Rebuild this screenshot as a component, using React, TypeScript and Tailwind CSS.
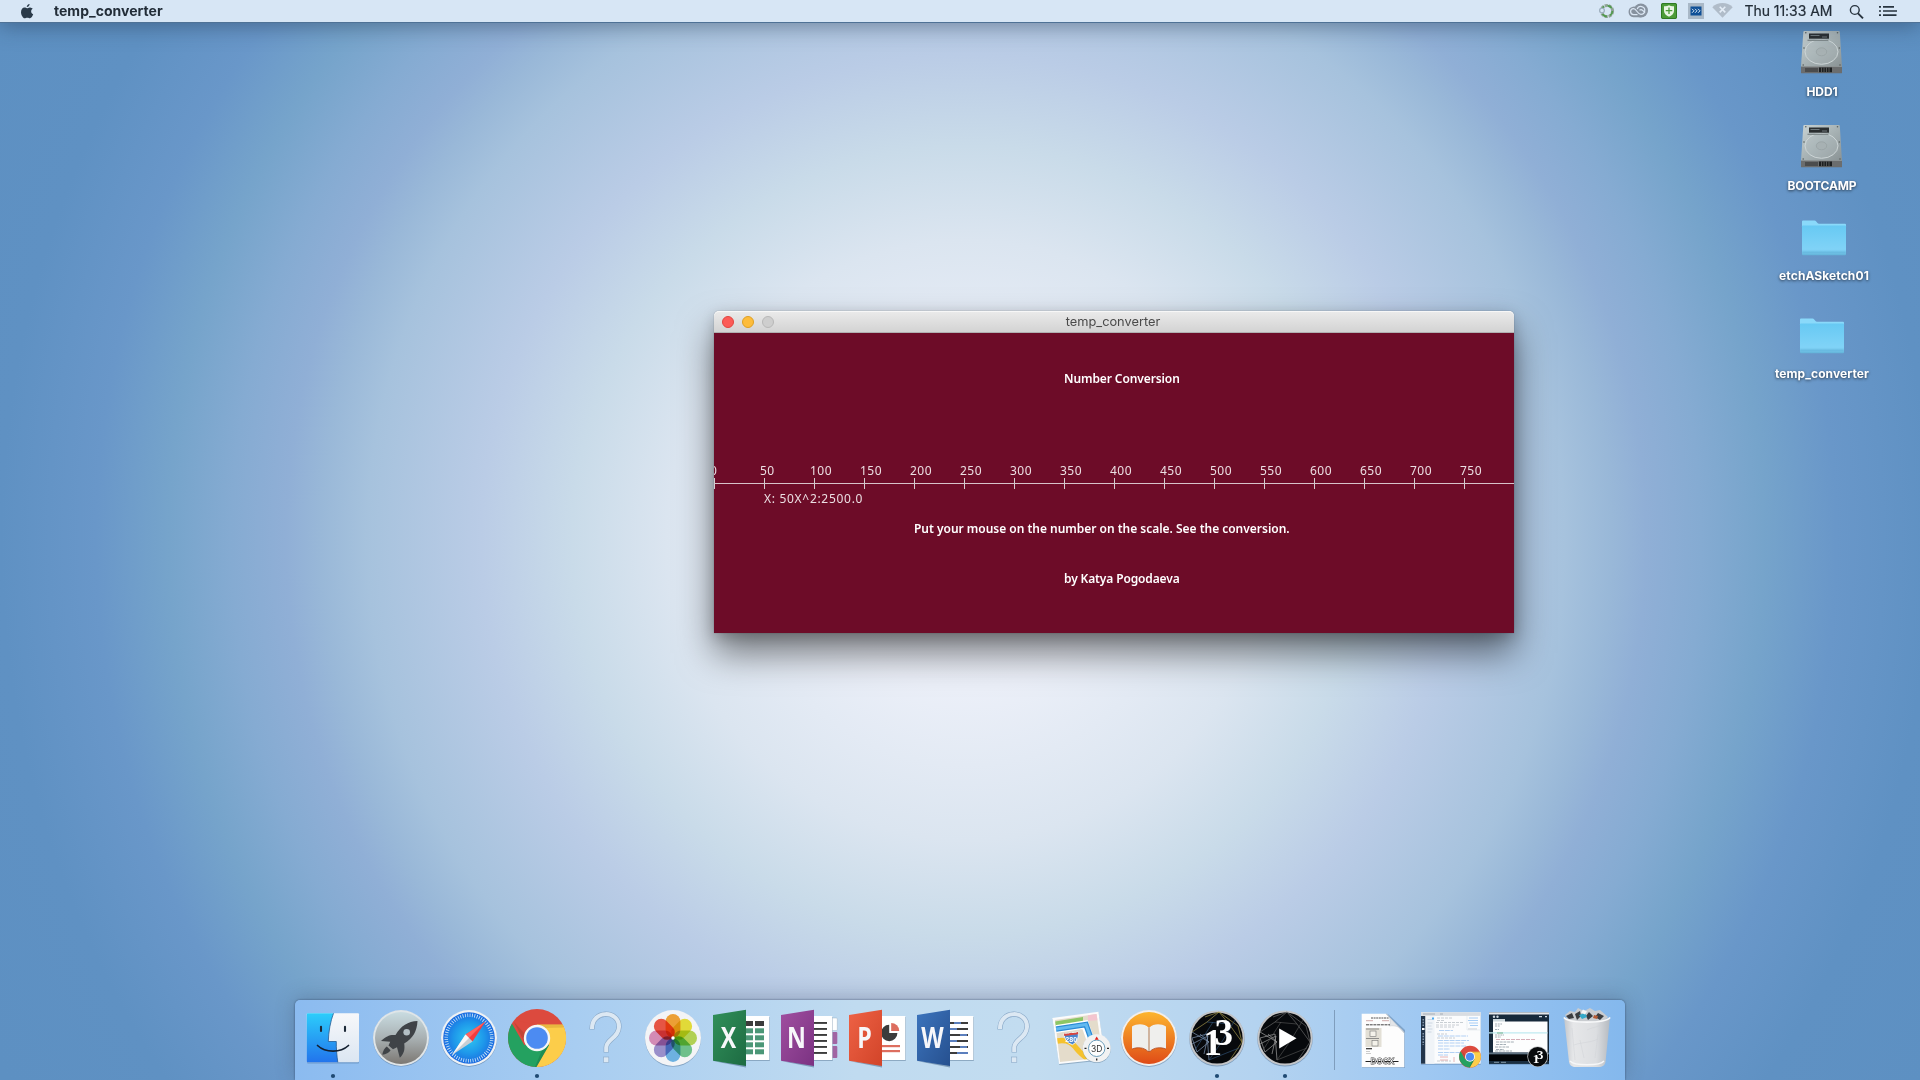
import React from "react";

const UI = "font-['Inter',sans-serif]";

/* ---------- menu bar ---------- */

function AppleMark() {
  return (
    <svg width="14" height="17" viewBox="0 0 14 17" fill="#2a3a49">
      <path d="M9.6 1c.1 1.6-1.300 3.100-2.800 3C6.600 2.500 8.100 1.100 9.600 1z" />
      <path d="M7 5.200c.6 0 1.600-.9 3.100-.8 1.100.1 2 .5 2.600 1.400-2.300 1.400-1.900 4.600.5 5.500-.6 1.700-1.900 4-3.200 4-1 0-1.400-.6-2.700-.6s-1.700.6-2.700.6C3.200 15.300 1 12 1 9.200c0-2.900 1.700-4.700 3.500-4.700 1.200 0 1.900.7 2.500.7z" />
    </svg>
  );
}

function MenuBar() {
  return (
    <header className={`relative z-10 flex h-[22px] items-center bg-[#d7e6f5] text-[#222d38] shadow-[0_1px_0_#4f7296,0_3px_22px_rgba(30,50,75,0.5)] ${UI}`}>
      <div className="ml-[20px] w-[34px]">
        <AppleMark />
      </div>
      <span className="text-[14px] font-bold leading-[22px] tracking-[0.02px]">temp_converter</span>
      <div className="ml-auto flex items-center">
        <svg width="150" height="22" viewBox="1592 0 150 22">
          {/* sync ring */}
          <circle cx="1607" cy="11" r="5.600" fill="none" stroke="#8fa395" strokeWidth="3" strokeDasharray="3 .9" />
          <circle cx="1607" cy="11" r="5.400" fill="none" stroke="#4f9a4c" strokeWidth="1.600" strokeDasharray="5 3.400" />
          <circle cx="1602" cy="10.500" r="2.400" fill="#d7e6f5" stroke="#9fb0c0" strokeWidth="1.300" />
          {/* creative cloud */}
          <path d="M1633.500 17.200a5.300 5.300 0 0 1-.6-10.500 4 4 0 0 1 2.500.1A7 7 0 0 1 1647.700 10.800a7 7 0 0 1-7 6.400z" fill="#87929f" />
          <circle cx="1640.900" cy="10.500" r="7" fill="#87929f" />
          <g fill="none" stroke="#dbe7f4" strokeWidth="1.200">
            <path d="M1637.500 14.600h-3.900a3 3 0 0 1 0-6c3 0 3.600 5.700 7.300 5.700a3.900 3.900 0 1 0-3.700-5.200" />
            <path d="M1639.500 10.200c1-.8 2-.9 3 .1l2.600 2.300" />
          </g>
          {/* shield */}
          <rect x="1661" y="3" width="16" height="16" rx="2" fill="#4c9b38" />
          <rect x="1661.500" y="3.500" width="15" height="15" rx="1.500" fill="none" stroke="#2f7a24" />
          <path d="M1664 6.200c2 .3 3.500-.1 5-1 1.500.9 3 1.300 5 1v4.500c0 3-2.300 4.800-5 6-2.700-1.200-5-3-5-6z" fill="#e9f5e4" />
          <path d="M1669 7.500v6.600M1665.700 10.600h6.600" stroke="#4c9b38" strokeWidth="1.300" />
          {/* remote desktop */}
          <rect x="1688" y="3" width="16" height="16" fill="#a9b8c7" />
          <rect x="1690.500" y="6.500" width="11" height="9" fill="#0f4f96" />
          <path d="M1692 8.800l2 2-2 2M1695 8.800l2 2-2 2M1698 8.800l2 2-2 2" fill="none" stroke="#dce9f6" strokeWidth="1" />
          {/* wifi, off */}
          <path d="M1722.500 17.800L1712.300 7.300a14.500 14.500 0 0 1 20.400 0z" fill="#b0bcc9" />
          <path d="M1719.700 6.800l5.600 5.600M1725.300 6.800l-5.600 5.600" stroke="#e4edf7" strokeWidth="1.600" />
        </svg>
        <span className="w-[90px] whitespace-nowrap pl-[2.500px] text-[14px] leading-[22px] tracking-[-0.05px] [-webkit-text-stroke:0.2px_#222d38]">Thu 11:33 AM</span>
        <svg width="88" height="22" viewBox="1832 0 88 22" fill="none" stroke="#28343f">
          <circle cx="1854.800" cy="10" r="4.400" strokeWidth="1.400" />
          <path d="M1858 13.300l5 5" strokeWidth="1.900" />
          <path d="M1883 6.800h11M1883 11h14M1883 15.200h13.500" strokeWidth="1.700" />
          <path d="M1879 6.800h2M1879 11h2M1879 15.200h2" strokeWidth="1.700" />
        </svg>
      </div>
    </header>
  );
}

/* ---------- desktop items ---------- */

function Drive() {
  return (
    <svg width="44" height="44" viewBox="0 0 44 44">
      <defs>
        <linearGradient id="drv" x1="0" y1="0" x2="1" y2="1">
          <stop offset="0" stopColor="#c9d3d4" />
          <stop offset=".5" stopColor="#a7b2b4" />
          <stop offset="1" stopColor="#899294" />
        </linearGradient>
      </defs>
      <path d="M4.300 1h34.400q1 0 1.100 1L42 37H1L3.300 2q.1-1 1-1z" fill="url(#drv)" />
      <path d="M1 36.500h41v6.200q0 .5-.5.5H1.500q-.5 0-.5-.5z" fill="#6b6d6e" />
      <path d="M1 36.500h41" stroke="#8d9394" strokeWidth="1" />
      <rect x="5" y="38" width="13" height="4" fill="#4b4c4d" />
      <rect x="19" y="37.500" width="13" height="4.700" fill="#1d1f20" />
      <path d="M21.500 37.500v4.700M24 37.500v4.700M26.500 37.500v4.700M29 37.500v4.700" stroke="#6b6d6e" strokeWidth=".7" />
      <ellipse cx="21.500" cy="21.800" rx="16.500" ry="12.500" fill="#b3bec0" fillOpacity=".35" stroke="#d0d8d9" strokeWidth=".9" />
      <ellipse cx="21.500" cy="21.800" rx="5.200" ry="4" fill="#a7b1b3" stroke="#959fa1" strokeWidth=".7" />
      <rect x="9" y="3.500" width="20" height="5.200" fill="#2a2e30" />
      <path d="M10.500 5.500h9M22 7h5" stroke="#6e777a" strokeWidth="1" />
      <rect x="7.500" y="9.700" width="21" height="1.200" fill="#7c8587" />
      <g fill="#59605f">
        <circle cx="5.800" cy="2.800" r=".8" />
        <circle cx="37.500" cy="2.800" r=".8" />
        <circle cx="4" cy="18" r=".8" />
        <circle cx="39.300" cy="18" r=".8" />
        <circle cx="3.200" cy="35" r=".8" />
        <circle cx="40" cy="35" r=".8" />
      </g>
    </svg>
  );
}

function Folder() {
  return (
    <svg width="46" height="36" viewBox="0 0 46 36">
      <defs>
        <linearGradient id="fld" x1="0" y1="0" x2="0" y2="1">
          <stop offset="0" stopColor="#67c9f3" />
          <stop offset=".8" stopColor="#80d3f7" />
          <stop offset=".9" stopColor="#72c4e9" />
          <stop offset="1" stopColor="#63b3d9" />
        </linearGradient>
      </defs>
      <path d="M1 1.500q0-1 1-1h11.500q1 0 1.700.9l1.300 1.700q.5.600 1.500.6H44q1 0 1 1V9H1z" fill="#8ad9fa" />
      <path d="M1 6.200q0-.8.800-.8h42.400q.8 0 .8.800V34q0 1.200-1 1.200H2q-1 0-1-1.200z" fill="url(#fld)" />
      <path d="M1.500 32.200h43" stroke="#5fb0d8" strokeWidth=".6" />
    </svg>
  );
}

function DesktopItem({ label, place, labelGap, track, children }: { label: string; place: string; labelGap: string; track: string; children: React.ReactNode }) {
  return (
    <div className={`absolute flex w-[120px] flex-col items-center ${place}`}>
      {children}
      <span className={`whitespace-nowrap text-[12px] font-bold leading-[16px] text-white [text-shadow:0_1px_3px_rgba(0,0,0,0.65)] ${UI} ${labelGap} ${track}`}>{label}</span>
    </div>
  );
}

/* ---------- application window ---------- */

const LUCIDA = "font-['Noto_Sans',sans-serif]";
const marks = Array.from({ length: 16 }, (_, i) => i * 50);

function SketchWindow() {
  return (
    <section className="absolute left-[714px] top-[311px] flex h-[322px] w-[800px] flex-col rounded-t-[5px] shadow-[0_0_1px_rgba(0,0,0,0.5),0_20px_36px_rgba(0,0,0,0.5),0_4px_14px_rgba(0,0,0,0.18)]">
      <div className="relative flex h-[22px] items-center rounded-t-[5px] border-b border-[#b1b1b1] bg-linear-to-b from-[#ebebeb] to-[#d3d3d3] px-2 shadow-[inset_0_1px_0_#f7f7f7]">
        <div className="flex gap-2">
          <i className="size-3 rounded-full border border-[#e2453f] bg-[#fc5b57]" />
          <i className="size-3 rounded-full border border-[#dfa023] bg-[#fdbc3b]" />
          <i className="size-3 rounded-full border border-[#b8b8b8] bg-[#cecece]" />
        </div>
        <span className={`absolute inset-x-0 top-[1px] pr-[2px] text-center text-[12.800px] leading-[20px] text-[#4a4a4a] ${UI}`}>temp_converter</span>
      </div>
      <div className={`flex h-[300px] flex-col overflow-hidden bg-[#6d0c28] text-[12px] leading-[16px] text-white ${LUCIDA}`}>
        <p className="ml-[350px] mt-[38px] whitespace-nowrap font-semibold tracking-[-0.1px]">Number Conversion</p>
        <div className="mt-[76px] flex w-[850px] text-[#ecdfe3]">
          {marks.map((n) => (
            <span key={n} className={n === 0 ? "-ml-[4px] w-[50px] shrink-0 tracking-[0.5px]" : "w-[50px] shrink-0 tracking-[0.5px]"}>
              {n}
            </span>
          ))}
        </div>
        <div className="relative -mt-px flex h-[11px]">
          <div className="absolute inset-x-0 top-[5px] h-px bg-[#d8c3ca]" />
          {marks.map((n) => (
            <div key={n} className="w-[50px] shrink-0 border-l border-[#d3ced0]" />
          ))}
        </div>
        <p className="ml-[50px] mt-[2px] whitespace-nowrap tracking-[0.7px] text-[#ecdfe3]">X: 50X^2:2500.0</p>
        <p className="ml-[200px] mt-[14px] whitespace-nowrap font-semibold tracking-[-0.02px]">Put your mouse on the number on the scale. See the conversion.</p>
        <p className="ml-[350px] mt-[34px] whitespace-nowrap font-semibold tracking-[-0.13px]">by Katya Pogodaeva</p>
      </div>
    </section>
  );
}

/* ---------- dock ---------- */

function Tile({ children, running }: { children: React.ReactNode; running?: boolean }) {
  return (
    <svg className="shrink-0" width="68" height="80" viewBox="0 0 68 80">
      {children}
      {running && <circle cx="34" cy="76" r="2.100" fill="#1f4a73" />}
    </svg>
  );
}

function Finder() {
  return (
    <Tile running>
      <defs>
        <linearGradient id="fnd" x1="0" y1="0" x2="0" y2="1">
          <stop offset="0" stopColor="#2ccdfb" />
          <stop offset="1" stopColor="#2274ec" />
        </linearGradient>
        <linearGradient id="fnw" x1="0" y1="0" x2="0" y2="1">
          <stop offset="0" stopColor="#f7f8fa" />
          <stop offset="1" stopColor="#dbe6f2" />
        </linearGradient>
      </defs>
      <rect x="8" y="14" width="52" height="49.500" rx="1" fill="#2c5685" opacity=".35" />
      <rect x="7.700" y="13.300" width="52.300" height="49" rx="1" fill="url(#fnw)" />
      <path d="M8.700 13.300h25.800C31.500 21 29.500 32 29.300 41.500h8c-.1 7 .5 14 1.500 20.800H8.700q-1 0-1-1v-47q0-1 1-1z" fill="url(#fnd)" />
      <path d="M34.500 13.300C31.500 21 29.500 32 29.300 41.500h8c-.1 7 .5 14 1.500 20.800" fill="none" stroke="#215a94" strokeWidth=".8" />
      <path d="M22 26.800v4.200M46 26.800v4.200" stroke="#1d2a38" strokeWidth="2.100" strokeLinecap="round" />
      <path d="M18.500 45.500c8 7.500 23 7.500 31 0" fill="none" stroke="#142030" strokeWidth="1.700" strokeLinecap="round" />
    </Tile>
  );
}

function Launchpad() {
  return (
    <Tile>
      <defs>
        <linearGradient id="lp" x1="0" y1="0" x2="0" y2="1">
          <stop offset="0" stopColor="#c9dce1" />
          <stop offset=".5" stopColor="#a9b1b3" />
          <stop offset="1" stopColor="#7c7873" />
        </linearGradient>
      </defs>
      <circle cx="34" cy="38.600" r="28" fill="#4a6a8c" opacity=".5" />
      <circle cx="34" cy="38" r="28" fill="#dfe5e8" />
      <circle cx="34" cy="38" r="26" fill="url(#lp)" />
      <path d="M50.500 21C41 21.500 34 25.500 28.500 35c-6-.500-9 1-14.500 6l9.200.7-1.700 3.800 4.500 3.800 4-2 2.800 10.500c4.500-4.500 5.200-8.500 4.400-14.300C46 38.500 50 31 50.500 21z" fill="#3f4347" />
      <circle cx="39.700" cy="32.300" r="3.300" fill="#b3bfc4" />
      <path d="M19.800 46.500c-2.500 1.500-3.800 4.500-4.500 8.300 3.700-.8 6.700-2 8.300-4.600z" fill="#3f4347" />
    </Tile>
  );
}

function Safari() {
  return (
    <Tile>
      <defs>
        <radialGradient id="sf">
          <stop offset="0" stopColor="#2fc8f0" />
          <stop offset=".6" stopColor="#1e97ea" />
          <stop offset="1" stopColor="#1b6ae0" />
        </radialGradient>
      </defs>
      <circle cx="34" cy="38.700" r="28" fill="#3c618a" opacity=".5" />
      <circle cx="34" cy="38" r="28" fill="#eef1f4" />
      <circle cx="34" cy="38" r="25.800" fill="url(#sf)" />
      <circle cx="34" cy="38" r="22.800" fill="none" stroke="#cfe6fa" strokeWidth="3.600" strokeDasharray=".8 1.588" />
      <path d="M50.500 21.500L37.500 41.500 30.500 34.500z" fill="#f23c3f" />
      <path d="M50.500 21.500L34 38l-3.500-3.500z" fill="#ff6461" />
      <path d="M17 55L30.500 34.500 37.500 41.500z" fill="#c8cfd4" />
      <path d="M17 55L30.500 34.500 34 38z" fill="#f8f8f8" />
    </Tile>
  );
}

function ChromeDisc() {
  return (
    <g>
      <circle r="29" fill="#dc4a3e" />
      <path d="M0 0L-12.600 7.250-25.100-14.500A29 29 0 0 0-.5 29L12.560 7.250z" fill="#24a160" />
      <path d="M0-13.500H25.800A29 29 0 0 1-.5 29L12 7.250z" fill="#fccd4a" />
      <path d="M-12 6L-22.500-18 0-13z" fill="#dc4a3e" />
      <path d="M-12 5L-23.500-16.500-12-4z" fill="#9c3b30" opacity=".4" />
      <path d="M0-13.500H25.800l.8 3L7-10z" fill="#c28f2a" opacity=".35" />
      <path d="M12 7L-.5 29l-1.500-.1L5 12z" fill="#116b3c" opacity=".35" />
      <circle r="13.200" fill="#f6f6f6" />
      <circle r="10.800" fill="#4c8bf2" />
    </g>
  );
}

function Chrome() {
  return (
    <Tile running>
      <g transform="translate(34 38)">
        <ChromeDisc />
      </g>
    </Tile>
  );
}

function Missing() {
  return (
    <Tile>
      <g fill="none" strokeLinejoin="miter">
        <path d="M21 29.500C20.500 9.500 48.300 9.500 48 27c-.3 11-12.800 12-12.800 20.500v5" stroke="#8aa9c8" strokeWidth="5.200" />
        <path d="M21 29C20.500 9.500 48.300 9.500 48 27c-.3 11-12.800 12-12.800 20.500v4.500" stroke="#dce8f3" strokeWidth="4" />
      </g>
      <rect x="32.500" y="57" width="5.300" height="5.600" fill="#dce8f3" stroke="#8aa9c8" strokeWidth=".6" />
    </Tile>
  );
}

const petals = [
  ["#f8a12c", 0],
  ["#ece32f", 45],
  ["#b6d84d", 90],
  ["#6cc68a", 135],
  ["#6ab5e8", 180],
  ["#9c8fd0", 225],
  ["#dc8bb8", 270],
  ["#f1503c", 315],
] as const;

function Photos() {
  return (
    <Tile>
      <circle cx="34" cy="38.800" r="28" fill="#5c7c9c" opacity=".55" />
      <circle cx="34" cy="38" r="28" fill="#f3f4f6" />
      {petals.map(([color, turn]) => (
        <rect key={turn} x="26.600" y="14" width="14.800" height="23.500" rx="7.400" fill={color} fillOpacity=".95" transform={`rotate(${turn} 34 38)`} style={{ mixBlendMode: "multiply" }} />
      ))}
      <circle cx="34" cy="38" r="1.700" fill="#fff" />
    </Tile>
  );
}

function OfficeFront({ letter, id, from, to }: { letter: string; id: string; from: string; to: string }) {
  return (
    <g>
      <defs>
        <linearGradient id={id} x1="0" y1="0" x2="1" y2="1">
          <stop offset="0" stopColor={from} />
          <stop offset="1" stopColor={to} />
        </linearGradient>
      </defs>
      <path d="M6 61l33 6.500v-3z" fill="#3f6285" opacity=".5" />
      <path d="M6 15L39 9.700V66L6 60.700z" fill={`url(#${id})`} />
      <text x="21.500" y="48.500" textAnchor="middle" fontFamily="Open Sans, sans-serif" fontWeight="700" fontSize="29" fill="#f7f7fa" transform="translate(21.500 0) scale(.8 1) translate(-21.500 0)">
        {letter}
      </text>
    </g>
  );
}

function Sheet({ right }: { right: number }) {
  return (
    <g>
      <rect x="36" y="17" width={right - 35.500} height="44" fill="#6b88a5" opacity=".6" />
      <rect x="36" y="16" width={right - 36} height="44" fill="#fff" />
    </g>
  );
}

function Excel() {
  return (
    <Tile>
      <Sheet right={62.300} />
      {[21, 28.300, 35.300, 42.300, 49.300].map((y, i) => (
        <g key={y} fill={i === 0 ? "#3c3c3c" : "#4b9777"}>
          <rect x="39" y={y} width="7" height="5" />
          <rect x="48" y={y} width="9" height="5" />
        </g>
      ))}
      <OfficeFront letter="X" id="xl" from="#31905a" to="#1d6b42" />
    </Tile>
  );
}

function OneNote() {
  return (
    <Tile>
      <rect x="56" y="18" width="6.300" height="12.500" rx="1" fill="#fff" stroke="#8aa1b8" strokeWidth=".4" />
      <rect x="56" y="32" width="6.300" height="12" rx="1" fill="#a165a3" />
      <rect x="56" y="46" width="6.300" height="12" rx="1" fill="#a165a3" />
      <Sheet right={57.300} />
      {[22, 28, 34, 40, 46, 52].map((y) => (
        <rect key={y} x="39" y={y} width="13" height="1.900" fill="#3c3c3c" />
      ))}
      <OfficeFront letter="N" id="on" from="#a04fa0" to="#7b3282" />
    </Tile>
  );
}

function PowerPoint() {
  return (
    <Tile>
      <Sheet right={62.300} />
      <path d="M46.200 33V24.800a8.200 8.200 0 1 0 8.200 8.200z" fill="#3c3c3c" />
      <path d="M48.200 31v-8a8 8 0 0 1 8 8z" fill="#dd6e5f" />
      <rect x="39" y="45" width="18" height="2.200" fill="#dd6e5f" />
      <rect x="39" y="50" width="18" height="2.200" fill="#dd6e5f" />
      <OfficeFront letter="P" id="pp" from="#ee6245" to="#d24429" />
    </Tile>
  );
}

function Word() {
  return (
    <Tile>
      <Sheet right={62.300} />
      {[22, 28, 34, 40, 46, 52].map((y, i) => (
        <g key={y}>
          <rect x="39" y={y} width="18" height="2" fill="#3c3c3c" />
          <rect x={i === 0 ? 43 : i === 5 ? 46 : i % 2 ? 39 : 49} y={y} width={i === 0 ? 7 : i === 5 ? 11 : 7} height="2" fill="#5b7fbd" />
        </g>
      ))}
      <OfficeFront letter="W" id="wd" from="#3c74bd" to="#26508f" />
    </Tile>
  );
}

function Maps() {
  return (
    <Tile>
      <defs>
        <clipPath id="mapc">
          <path d="M8 20L49.500 14 56 57.500 13 62z" />
        </clipPath>
      </defs>
      <path d="M5.500 19L51.500 12.500 58.500 60 12.300 65z" fill="#5f7f9c" opacity=".5" />
      <path d="M5.300 18L51.500 11.700 58.300 59 12 64z" fill="#fbfbfb" />
      <g clipPath="url(#mapc)">
        <rect width="68" height="80" fill="#e4dccb" />
        <path d="M8 21.500l28-4.500v5L8 26z" fill="#8cc665" />
        <path d="M41 14h12v6l-12 1z" fill="#f3c5cf" />
        <path d="M6 29.500L38 24.500l5 14 3 20" fill="none" stroke="#fff" strokeWidth="8" />
        <path d="M6 29.500L39 24.500l5 14 3 20" fill="none" stroke="#2a8ad6" strokeWidth="5.500" />
        <path d="M6 29.500L39 24.500l5 14 3 20" fill="none" stroke="#62b9f0" strokeWidth="3" />
        <path d="M10 41c12-2 16 3 20 8s8 8 14 12" fill="none" stroke="#f5c22e" strokeWidth="5.500" />
      </g>
      <path d="M17 33.500q3.500 1 7-.8 4 1.200 7-1 1.800 9-5.500 13-8-2-8.500-11.200z" fill="#4a86cf" stroke="#fff" strokeWidth=".8" />
      <path d="M17 33.500q3.500 1 7-.8 4 1.200 7-1l.2 2.600-14 1.800z" fill="#d9453f" />
      <text x="24.200" y="41.500" textAnchor="middle" fontFamily="Liberation Sans, sans-serif" fontWeight="700" fontSize="7" fill="#fff">280</text>
      <circle cx="49.700" cy="49" r="14" fill="#68859f" opacity=".6" />
      <circle cx="49.700" cy="48.300" r="14" fill="#f2f2f2" />
      <circle cx="49.700" cy="48.300" r="8.200" fill="#fdfdfd" stroke="#6c9dba" strokeWidth="1" />
      <path d="M49.700 36.500l2 3.300h-4z" fill="#e2231a" />
      <path d="M37.500 48.300h2M60 48.300h2M49.700 58.500v2" stroke="#222" strokeWidth="1.300" />
      <text x="49.600" y="51.500" textAnchor="middle" fontFamily="Inter, sans-serif" fontSize="8.500" fill="#333">3D</text>
    </Tile>
  );
}

function Books() {
  return (
    <Tile>
      <defs>
        <linearGradient id="bk" x1="0" y1="0" x2="0" y2="1">
          <stop offset="0" stopColor="#fdb52e" />
          <stop offset="1" stopColor="#df4b17" />
        </linearGradient>
      </defs>
      <circle cx="34" cy="38.700" r="28.200" fill="#5c7c9c" opacity=".5" />
      <circle cx="34" cy="38" r="28" fill="#f2efec" />
      <circle cx="34" cy="38" r="26" fill="url(#bk)" />
      <path d="M33.500 27.500c-4-4-11.500-4-16.500-1v22.500c5-2 12-2 16 2.500h2c4-4.500 11-4.500 16-2.500V26.500c-5-3-12.500-3-16.500 1z" fill="#efefed" />
      <path d="M34 27.500v24" stroke="#ba8c6c" strokeWidth="1.200" />
      <path d="M17 49c5-2 12-2 16 2.500h2c4-4.500 11-4.500 16-2.500" fill="none" stroke="#a8411c" strokeWidth=".7" />
    </Tile>
  );
}

function Web({ a, b, c }: { a: string; b: string; c: string }) {
  return (
    <g fill="none" strokeWidth=".9">
      <path d="M22 17L36 12 55 26 59 42 47 60M9 32L24 22 36 12M36 12L46 24 59 42" stroke={a} opacity=".75" />
      <path d="M9 32L26 42 14 52 9 38 24 34 26 60M9 44l16-8-4 18M26 42L17 34" stroke={b} opacity=".8" />
      <path d="M26 60L46 52 56 48M24 22L46 24M26 60L40 40 52 20M12 50l18-28" stroke={c} opacity=".7" />
    </g>
  );
}

function Coin({ children }: { children: React.ReactNode }) {
  return (
    <g>
      <circle cx="34" cy="38.700" r="27.800" fill="#5c7c9c" opacity=".6" />
      <circle cx="34" cy="38" r="27.600" fill="#c4c6c9" />
      <circle cx="34" cy="38" r="25.600" fill="#07090c" />
      {children}
    </g>
  );
}

function P3Glyph() {
  return (
    <text x="20.500" y="55" fill="#fff" fontFamily="Liberation Serif, serif" fontWeight="700" fontSize="37">
      1<tspan dx="-7.500" dy="-10">3</tspan>
    </text>
  );
}

function Processing() {
  return (
    <Tile running>
      <Coin>
        <Web a="#a89a4c" b="#7c93b0" c="#33567c" />
        <P3Glyph />
      </Coin>
    </Tile>
  );
}

function Player() {
  return (
    <Tile running>
      <Coin>
        <Web a="#6c6c6c" b="#9a9a9a" c="#565656" />
        <path d="M28.200 28.500v20L45.500 38.300z" fill="#fff" />
      </Coin>
    </Tile>
  );
}

function DocFile() {
  return (
    <Tile>
      <path d="M14 14.500h26.500L57 30v38H14z" fill="#5b7da2" opacity=".5" />
      <path d="M13.700 13.700H38L56.300 33v34.300H13.700z" fill="#fdfdfd" />
      <path d="M38 13.700c4 2 5 7 3.500 12.300 6-1 12 1 14.800 7z" fill="#e3e5e8" stroke="#c0c4ca" strokeWidth=".5" />
      <path d="M23 18h18" stroke="#555" strokeWidth="1" strokeDasharray="2 .6" />
      <path d="M18 20.700h7M34 20.700h7" stroke="#b88" strokeWidth=".7" />
      <path d="M18 24.800h24" stroke="#444" strokeWidth="1" strokeDasharray="3 .7" />
      <rect x="17.500" y="28" width="16" height="19" fill="#e3e0d6" />
      <path d="M18 29h13M18 38.500h13" stroke="#777" strokeWidth=".8" />
      <rect x="22" y="31" width="6" height="5.500" fill="#f4f2ea" stroke="#777" strokeWidth=".6" />
      <rect x="24" y="40.500" width="6" height="5.500" fill="#f4f2ea" stroke="#777" strokeWidth=".6" />
      <path d="M18 48.700h6" stroke="#333" strokeWidth="1.200" />
      <path d="M18 51.500h4M18 53.500h5" stroke="#aaa" strokeWidth=".6" />
      <path d="M17.500 61.500h33" stroke="#222" strokeWidth="1" />
      <text x="34.700" y="64" textAnchor="middle" fontFamily="Inter, sans-serif" fontSize="7.400" letterSpacing=".6" fill="#fff" stroke="#444" strokeWidth="1.200" paintOrder="stroke">DOCX</text>
    </Tile>
  );
}

function BrowserThumb() {
  return (
    <Tile>
      <rect x="5" y="13" width="59.700" height="51.700" fill="#4f759f" opacity=".5" />
      <rect x="5" y="12.300" width="59.700" height="51.400" fill="#fbfcfd" />
      <rect x="5" y="12.300" width="59.700" height="3.600" fill="#d9dde2" />
      <path d="M7 14h12M24 14h3" stroke="#9aa3ad" strokeWidth=".8" />
      <rect x="5" y="16" width="4.500" height="47.700" fill="#22354b" />
      <path d="M7.200 19v8M7.200 33v12" stroke="#9fb3c6" strokeWidth="1.200" strokeDasharray="1.500 1.300" />
      <path d="M6 29h2.500" stroke="#fff" strokeWidth="2" />
      <rect x="9.500" y="16" width="9" height="47.700" fill="#f0f4f8" />
      <path d="M11.500 19.500h5M11.500 23h5M11.500 26h4M11.500 29h5M11.500 32h4" stroke="#c4d0dc" strokeWidth=".8" />
      <rect x="16" y="17.500" width="2" height="2" fill="#4aa8f0" />
      <g strokeWidth=".9" fill="none">
        <path d="M21 18h16M21 20.500h8M20 22.500h28M20 25h24M20 27h18M21 34h10M21 38h18M21 61h14" stroke="#c2c8ce" strokeDasharray="3 1" />
        <path d="M23 30.500h14M22 36h30M22 40.500h31M22 43h26M22 46h28M22 49h12M22 52.500h25M22 55h10" stroke="#a9ccf3" strokeDasharray="5 .8" />
        <path d="M53 18h9M52 20.500h10M53 23h9M54 25.500h8" stroke="#9cc8f5" />
        <path d="M52 29h9" stroke="#c2c8ce" />
        <path d="M24 57h8M24 60h8M38 57v5" stroke="#e3a3a3" strokeWidth=".8" />
      </g>
      <path d="M51 16v14h13" stroke="#dfe6ed" strokeWidth=".6" fill="none" />
      <g transform="translate(54 56.700) scale(.375)">
        <ChromeDisc />
      </g>
    </Tile>
  );
}

function EditorThumb() {
  return (
    <Tile>
      <rect x="5" y="13" width="60" height="51.700" fill="#4f759f" opacity=".5" />
      <rect x="5" y="12.300" width="60" height="51.400" fill="#16293a" />
      <rect x="5" y="12.300" width="60" height="2.200" fill="#e3e6e9" />
      <circle cx="10" cy="16.700" r="1.200" fill="#cfd9e2" />
      <circle cx="13.500" cy="16.700" r="1.200" fill="#cfd9e2" />
      <path d="M55 16.700h3M61 16.700h2" stroke="#cfd9e2" strokeWidth="1.300" />
      <rect x="9" y="19" width="12" height="3" fill="#cdd8dd" />
      <rect x="9" y="21.500" width="54.500" height="31" fill="#fdfefe" />
      <path d="M5 32.800h58.500" stroke="#bfeaf0" strokeWidth="1.300" />
      <g strokeWidth=".9" fill="none" stroke="#9aa6ae">
        <path d="M11 24h7M11 26h5M11 29.500h4M11 37h6M11 35h9" strokeDasharray="2 .7" />
        <path d="M12 39.500h40" stroke="#cfa5b0" strokeDasharray="4 1" />
        <path d="M12 42h18M12 44.500h10M11 47h14M12 49.500h8M11 51h17" strokeDasharray="3 .7" />
        <path d="M13 33h6" stroke="#68a87d" />
      </g>
      <rect x="5" y="52.500" width="60" height="2" fill="#5e7180" />
      <rect x="5" y="54.500" width="60" height="6.500" fill="#020406" />
      <rect x="5" y="61" width="60" height="2.700" fill="#1b2f41" />
      <path d="M10 62.300h5M17 62.300h5" stroke="#9fb3c0" strokeWidth=".8" />
      <circle cx="53.700" cy="56.700" r="10.400" fill="#c7c9cb" />
      <circle cx="53.700" cy="56.700" r="9.700" fill="#090b0d" />
      <g transform="translate(53.700 56.700) scale(.36) translate(-34 -38)">
        <P3Glyph />
      </g>
    </Tile>
  );
}

function Trash() {
  return (
    <Tile>
      <defs>
        <linearGradient id="tr" x1="0" y1="0" x2="1" y2="0">
          <stop offset="0" stopColor="#c3c6ca" />
          <stop offset=".2" stopColor="#e6e7e9" />
          <stop offset=".7" stopColor="#dcdee1" />
          <stop offset="1" stopColor="#b5bac0" />
        </linearGradient>
      </defs>
      <path d="M13 15l5-4 5 1 3-4 6 3 6-3 5 3 5-1 8 7-6 6H18z" fill="#c9ccd0" />
      <path d="M14 16l6-3 2 5-5 1zM23 14l5-3 1 5-4 4zM37 12l4 4-5 4-2-4zM46 13l6 3-4 4-5-3z" fill="#3b3d41" />
      <path d="M27 15l6-2 2 4-5 2z" fill="#36a9c9" />
      <path d="M42 15l4 1-1 3-4-1z" fill="#b55a34" />
      <path d="M31 9.500l4 2-2 3-4-2z" fill="#f6f6f6" />
      <path d="M12 17c6 6 40 6 46 0L53.500 62c-.5 3-3 5-7 5H24c-4 0-6.500-2-7-5z" fill="url(#tr)" />
      <path d="M11.800 17.500c6 6.200 40.400 6.200 46.400 0" fill="none" stroke="#f8f9fa" strokeWidth="1.600" />
      <path d="M20 28l3 32M35 30c4-2 9-3 15-5M28 40l4 18M46 34l-3 24M22 45c8-3 16-2 24-6" stroke="#cfd1d5" strokeWidth="1" fill="none" opacity=".45" />
      <path d="M18 61c4 5 30 5 34 0" stroke="#f6f7f8" strokeWidth="1.300" fill="none" />
    </Tile>
  );
}

function Dock() {
  return (
    <nav className="absolute bottom-0 left-[295px] flex h-[80px] w-[1330px] rounded-t-[5px] bg-[linear-gradient(90deg,#8bbbf0_0px,#a8cdf1_280px,#c0dbf0_560px,#c2dcf0_740px,#b4d3f0_960px,#9fc8f2_1130px,#84b8ed_1330px)] pl-1 shadow-[0_0_2px_rgba(40,60,90,0.8),0_-2px_20px_rgba(50,60,90,0.3)]">
      <Finder />
      <Launchpad />
      <Safari />
      <Chrome />
      <Missing />
      <Photos />
      <Excel />
      <OneNote />
      <PowerPoint />
      <Word />
      <Missing />
      <Maps />
      <Books />
      <Processing />
      <Player />
      <div className="flex w-[29px] shrink-0 justify-center pl-[2px] pt-[10px]">
        <div className="h-[60px] w-px bg-[#7f9dbd]" />
      </div>
      <DocFile />
      <BrowserThumb />
      <EditorThumb />
      <Trash />
    </nav>
  );
}

export default function App() {
  return (
    <main className="relative h-[1080px] w-[1920px] overflow-hidden bg-[radial-gradient(circle_at_966px_540px,#eff2fb_0px,#ebeff8_150px,#dbe5f0_300px,#c9dbe9_394px,#bacce6_485px,#a6c2dd_599px,#99b8d8_645px,#90afd6_680px,#85abd2_735px,#76a4cb_797px,#6997c9_870px,#5f91c3_965px,#5d90c2_1100px)]">
      <MenuBar />
      <DesktopItem label="HDD1" place="left-[1762px] top-[30px]" labelGap="mt-[10px]" track="tracking-[-0.1px]">
        <Drive />
      </DesktopItem>
      <DesktopItem label="BOOTCAMP" place="left-[1762px] top-[124px]" labelGap="mt-[10px]" track="tracking-[-0.15px]">
        <Drive />
      </DesktopItem>
      <DesktopItem label="etchASketch01" place="left-[1764px] top-[220px]" labelGap="mt-[12px]" track="tracking-[0.1px]">
        <Folder />
      </DesktopItem>
      <DesktopItem label="temp_converter" place="left-[1762px] top-[318px]" labelGap="mt-[12px]" track="tracking-[0.08px]">
        <Folder />
      </DesktopItem>
      <SketchWindow />
      <Dock />
    </main>
  );
}
